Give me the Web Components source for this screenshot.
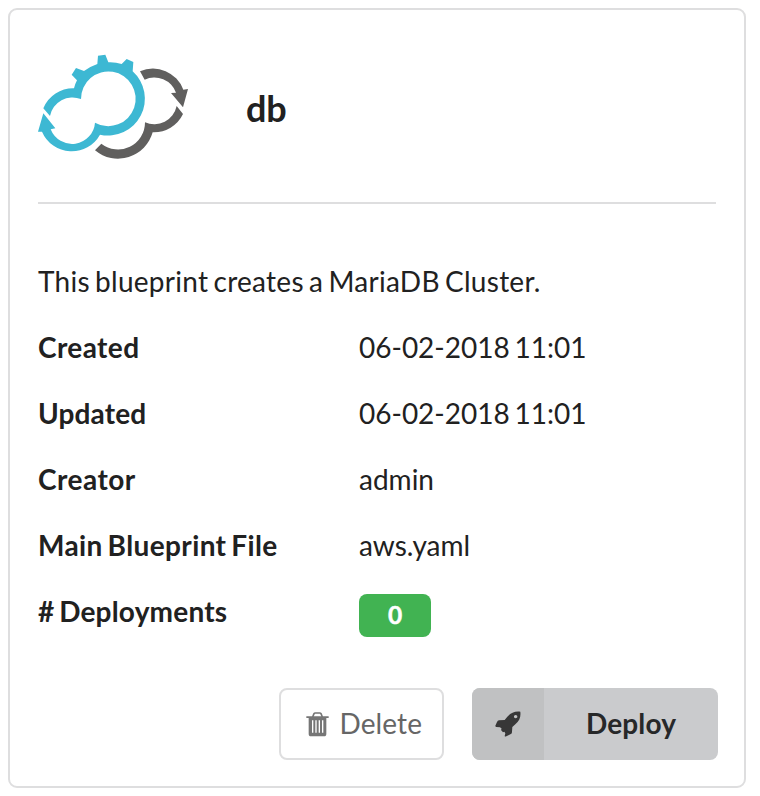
<!DOCTYPE html>
<html lang="en">
<head>
<meta charset="utf-8">
<title>Blueprint</title>
<style>
body{margin:0;background:#fff;color:#212121;font:28px/40px Lato,"Liberation Sans",sans-serif}
</style>
</head>
<body>
<blueprint-card heading="db">
  <blueprint-logo slot="logo"></blueprint-logo>
  <p-text slot="body">This blueprint creates a MariaDB Cluster.</p-text>
  <detail-row slot="body" label="Created" style="--track:.4px">06-02-2018 11:01</detail-row>
  <detail-row slot="body" label="Updated" style="--track:.15px">06-02-2018 11:01</detail-row>
  <detail-row slot="body" label="Creator" style="--track:.5px">admin</detail-row>
  <detail-row slot="body" label="Main Blueprint File" style="--track:.38px">aws.yaml</detail-row>
  <detail-row slot="body" label="# Deployments" style="--track:.2px"><count-label>0</count-label></detail-row>
  <delete-button slot="actions">Delete</delete-button>
  <deploy-button slot="actions">Deploy</deploy-button>
</blueprint-card>
<script>
function define(name, html) {
  customElements.define(name, class extends HTMLElement {
    connectedCallback() {
      if (this.shadowRoot) return;
      this.attachShadow({mode: 'open'}).innerHTML = html;
      this.shadowRoot.querySelectorAll('[data-attr]').forEach(e => {
        e.textContent = this.getAttribute(e.dataset.attr);
      });
    }
  });
}

define('blueprint-card', `
<style>
:host{display:flex;flex-direction:column;box-sizing:border-box;width:738px;height:780px;margin:8px;border:2px solid #dededf;border-radius:9px;padding:34px 28px 26px;background:#fff}
header{display:flex;align-items:flex-start;box-sizing:border-box;height:160px;border-bottom:2px solid #dededf}
h1{margin:41px 0 0 46px;font-size:36px;line-height:46px;font-weight:700;letter-spacing:-.2px}
.body{display:flex;flex-direction:column;gap:26px;padding-top:57px}
.actions{display:flex;justify-content:flex-end;gap:28px;margin:auto -2px 0 0}
</style>
<header><slot name="logo"></slot><h1 data-attr="heading"></h1></header>
<div class="body"><slot name="body"></slot></div>
<div class="actions"><slot name="actions"></slot></div>`);

define('blueprint-logo', `
<style>:host{display:block;width:170px;height:125px;margin:1px 0 0 -8px}svg{display:block}</style>
<svg width="170" height="125" viewBox="0 0 510 375">
<path fill="#3db8d3" d="M40 190A97 97 0 0 1 132 130Q135 117 141 106L125 89L138 69L162 78Q179 65 202 57L204 32L226 29L235 52Q256 51 275 57L290 42L310 51L308 79A110.500 110.500 0 0 1 210 269A97 97 0 0 1 36 260L24 260L40 205L76 250L62 253A69 69 0 0 0 195 233A82 82 0 1 0 153 162A69 69 0 0 0 60 213Z"/>
<path fill="#605f5e" d="M330 79A97 97 0 0 1 460 134L474 132L459 187L423 144L438 143A69 69 0 0 0 344 104Z"/>
<path fill="#605f5e" d="M440 183L459 207A97 97 0 0 1 368 262A108 108 0 0 1 195 316L214 296A81 81 0 0 0 345 232A69 69 0 0 0 440 183Z"/>
</svg>`);

define('p-text', `<style>:host{display:block;letter-spacing:.27px;word-spacing:-2.2px}</style><slot></slot>`);

define('detail-row', `
<style>:host{display:grid;grid-template-columns:321px 1fr;height:40px;word-spacing:-2.3px}b{font-weight:700;letter-spacing:var(--track)}</style>
<b data-attr="label"></b><span><slot></slot></span>`);

define('count-label', `
<style>:host{display:block;width:72px;height:43px;margin-top:3px;border-radius:8px;background:#41b352;color:#fff;font-size:24.5px;font-weight:700;line-height:42px;text-align:center;-webkit-text-stroke:.5px #fff}</style>
<slot></slot>`);

define('delete-button', `
<style>:host{display:flex;align-items:center;box-sizing:border-box;width:165px;height:72px;padding-left:25px;border:2px solid #dededf;border-radius:8px;color:#666;background:#fff}
svg{flex:none;margin-right:10.5px}span{padding-bottom:2px;letter-spacing:.1px}</style>
<svg width="23" height="25" viewBox="0 0 69 75"><path fill="none" stroke="#767676" stroke-width="5" d="M20 15L24 5Q25 3 28 3H41Q44 3 45 5L49 15"/><path fill="#767676" fill-rule="evenodd" d="M1 13H68V18H61V65Q61 73 54 73H15Q8 73 8 65V18H1ZM18 25V62H22V25ZM28 25V62H32V25ZM38 25V62H42V25ZM48 25V62H52V25Z"/></svg>
<span><slot></slot></span>`);

define('deploy-button', `
<style>:host{display:flex;width:246px;height:72px;border-radius:8px;overflow:hidden;background:#cacbcd;color:#272829;font-weight:700}
i{display:flex;align-items:center;justify-content:center;width:72px;background:#c0c1c2}
span{flex:1;text-align:center;line-height:70px;letter-spacing:.15px}</style>
<i><svg width="26" height="26" viewBox="0 0 78 78"><path fill="#373737" fill-rule="evenodd" d="M76 2C59 0 47 6 37 17L29 27L12 28Q8 29 6 33L1 44Q0 47 4 48L15 49Q18 51 20 53L18 57L24 64L28 62L31 67L29 75Q30 78 34 76L49 68Q51 66 51 62L52 48L61 40C73 30 78 20 76 2ZM62 12A5 5 0 1 1 61.900 12Z"/></svg></i>
<span><slot></slot></span>`);
</script>
</body>
</html>
